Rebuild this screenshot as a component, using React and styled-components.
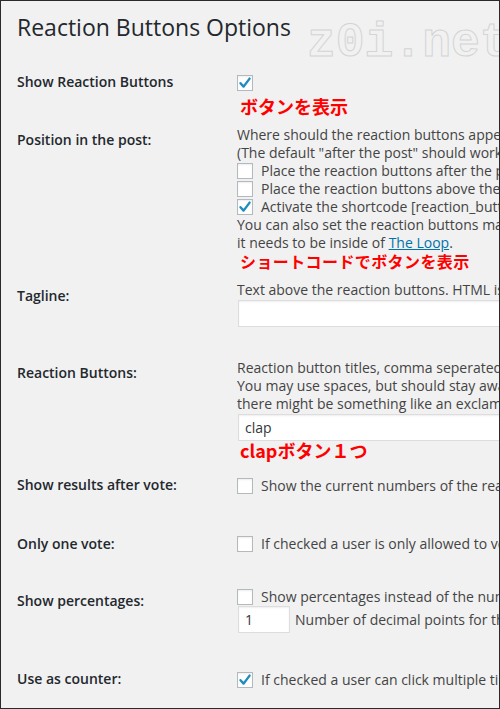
import React from "react";
import styled, { createGlobalStyle } from "styled-components";

const GlobalStyle = createGlobalStyle`
  html, body {
    margin: 0;
    padding: 0;
    background: #f1f1f1;
  }
  * {
    box-sizing: border-box;
  }
`;

const Frame = styled.div`
  position: relative;
  width: 500px;
  height: 709px;
  overflow: hidden;
  background: #f1f1f1;
  border: 1px solid #2a2a2a;
  padding: 0 0 0 16px;
  font-family: "Open Sans", "Noto Sans", sans-serif;
  color: #444;
`;

const Watermark = styled.div`
  position: absolute;
  left: 306px;
  top: 14px;
  font-family: "Liberation Mono", monospace;
  font-weight: 700;
  font-size: 48px;
  line-height: 56px;
  color: transparent;
  -webkit-text-stroke: 1px #d4d4d4;
  white-space: nowrap;
  pointer-events: none;
`;

const Title = styled.h1`
  margin: 0;
  padding-top: 10px;
  font-size: 23px;
  font-weight: 400;
  line-height: 32px;
  color: #23282d;
`;

const Row = styled.div`
  display: grid;
  grid-template-columns: 220px 1fr;
  margin-top: ${(p) => p.$mt}px;
`;

const Label = styled.div`
  margin-top: ${(p) => p.$offset}px;
  font-size: 14px;
  font-weight: 600;
  line-height: 18px;
  color: #23282d;
  white-space: nowrap;
`;

const Content = styled.div`
  font-size: 14px;
  line-height: 18px;
  white-space: nowrap;
  min-width: 0;
`;

const Line = styled.div`
  display: flex;
  align-items: center;
  height: 18px;
`;

const Box = styled.span`
  display: inline-flex;
  align-items: center;
  justify-content: center;
  flex: none;
  width: 16px;
  height: 16px;
  margin-right: 8px;
  background: #fff;
  border: 1px solid #b4b9be;
  box-shadow: inset 0 1px 2px rgba(0, 0, 0, 0.07);
`;

const Link = styled.a`
  color: #0073aa;
  text-decoration: underline;
`;

const TextInput = styled.div`
  width: ${(p) => p.$w}px;
  height: 27px;
  margin-top: ${(p) => p.$mt || 0}px;
  margin-left: 1px;
  padding: 0 6px;
  background: #fff;
  border: 1px solid #ddd;
  box-shadow: inset 0 1px 2px rgba(0, 0, 0, 0.07);
  font-size: 14px;
  line-height: 25px;
  color: #32373c;
  flex: none;
`;

const InputLine = styled.div`
  display: flex;
  align-items: center;
  gap: 5px;
`;

const Note = styled.div`
  margin-top: ${(p) => p.$mt || 0}px;
  padding-left: 3px;
  font-family: "Noto Sans CJK JP", "Noto Sans", sans-serif;
  font-weight: 700;
  font-size: ${(p) => p.$size || 16}px;
  line-height: 18px;
  letter-spacing: ${(p) => p.$ls || 0}px;
  color: #ff0000;
`;

const Check = () => (
  <svg width="14" height="14" viewBox="0 0 14 14">
    <path
      d="M2.5 7.2 L5.6 10.6 L11.6 2.6"
      fill="none"
      stroke="#1e8cbe"
      strokeWidth="2.4"
      strokeLinecap="round"
      strokeLinejoin="round"
    />
  </svg>
);

const Checkbox = ({ checked, children }) => (
  <Line>
    <Box>{checked && <Check />}</Box>
    {children}
  </Line>
);

export default function App() {
  return (
    <>
      <GlobalStyle />
      <Frame>
        <Watermark>z0i.net</Watermark>
        <Title>Reaction Buttons Options</Title>

        <Row $mt={31}>
          <Label $offset={-1}>Show Reaction Buttons</Label>
          <Content>
            <Checkbox checked />
            <Note $mt={5} $size={18}>
              ボタンを表示
            </Note>
          </Content>
        </Row>

        <Row $mt={11}>
          <Label $offset={5}>Position in the post:</Label>
          <Content>
            <div>Where should the reaction buttons appear in your posts?</div>
            <div>(The default "after the post" should work for most themes.)</div>
            <Checkbox>Place the reaction buttons after the post.</Checkbox>
            <Checkbox>Place the reaction buttons above the post.</Checkbox>
            <Checkbox checked>
              Activate the shortcode [reaction_buttons] for use in posts.
            </Checkbox>
            <div>
              You can also set the reaction buttons manually with the function
              reaction_buttons(), but
            </div>
            <div>
              it needs to be inside of <Link>The Loop</Link>.
            </div>
            <Note $ls={0.4}>ショートコードでボタンを表示</Note>
          </Content>
        </Row>

        <Row $mt={11}>
          <Label $offset={6}>Tagline:</Label>
          <Content>
            <div>Text above the reaction buttons. HTML is allowed.</div>
            <TextInput $w={420} $mt={1} />
          </Content>
        </Row>

        <Row $mt={32}>
          <Label $offset={5}>Reaction Buttons:</Label>
          <Content>
            <div>Reaction button titles, comma seperated. The first one will be shown first.</div>
            <div>You may use spaces, but should stay away from special characters because</div>
            <div>there might be something like an exclamation mark in the url.</div>
            <TextInput $w={420} $mt={1}>
              clap
            </TextInput>
            <Note $size={18}>clapボタン１つ</Note>
          </Content>
        </Row>

        <Row $mt={18}>
          <Label $offset={-1}>Show results after vote:</Label>
          <Content>
            <Checkbox>Show the current numbers of the reactions after the user voted.</Checkbox>
          </Content>
        </Row>

        <Row $mt={40}>
          <Label $offset={0}>Only one vote:</Label>
          <Content>
            <Checkbox>If checked a user is only allowed to vote once per post.</Checkbox>
          </Content>
        </Row>

        <Row $mt={35}>
          <Label $offset={4}>Show percentages:</Label>
          <Content>
            <Checkbox>Show percentages instead of the numbers of votes.</Checkbox>
            <InputLine>
              <TextInput $w={52}>1</TextInput>
              <span>Number of decimal points for the percentages.</span>
            </InputLine>
          </Content>
        </Row>

        <Row $mt={38}>
          <Label $offset={-1}>Use as counter:</Label>
          <Content>
            <Checkbox checked>
              If checked a user can click multiple times on a button.
            </Checkbox>
          </Content>
        </Row>
      </Frame>
    </>
  );
}
